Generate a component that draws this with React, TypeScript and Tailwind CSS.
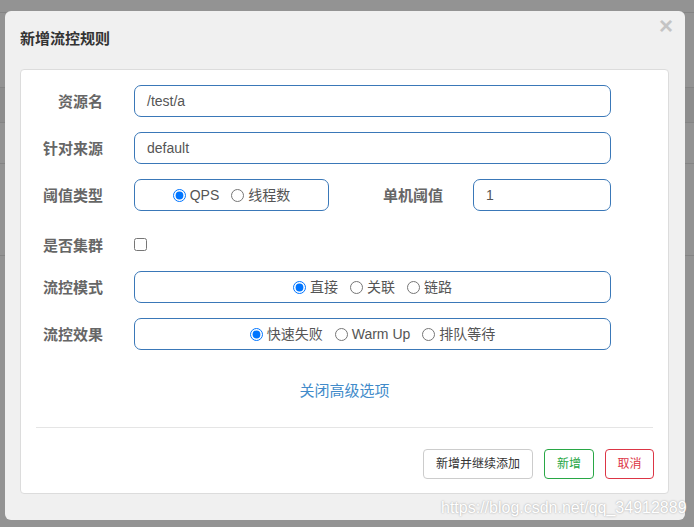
import React from "react";

const font = "font-['Liberation_Sans','Noto_Sans_CJK_SC',sans-serif]";

function Label({ text, className = "" }: { text: string; className?: string }) {
  return (
    <div className={`text-right text-[15px] font-bold text-[#666] leading-[20px] pt-[2px] ${className}`}>
      {text}
    </div>
  );
}

function Radio({ label, checked, first }: { label: string; checked?: boolean; first?: boolean }) {
  return (
    <label className={`flex items-center ${first ? "" : "ml-[12px]"}`}>
      <input type="radio" defaultChecked={checked} className="m-0 w-[13px] h-[13px]" name={label} />
      <span className="ml-[4px] text-[14px] text-[#555] leading-[18px]">{label}</span>
    </label>
  );
}

function RadioBox({ items, className }: { items: { label: string; checked?: boolean }[]; className: string }) {
  return (
    <div
      className={`h-[32px] flex items-center justify-center border border-[#3a78b8] rounded-[7px] ${className}`}
    >
      {items.map((it, i) => (
        <Radio key={it.label} label={it.label} checked={it.checked} first={i === 0} />
      ))}
    </div>
  );
}

function TextInput({ value, className }: { value: string; className: string }) {
  return (
    <div
      className={`h-[32px] flex items-center px-[12px] border border-[#3a78b8] rounded-[7px] text-[14px] text-[#555] ${className}`}
    >
      {value}
    </div>
  );
}

export default function App() {
  const bgLines = [12, 87, 122, 163, 255];

  return (
    <div className={`relative w-[694px] h-[527px] overflow-hidden bg-[#939393] ${font}`}>
      {/* page behind the overlay */}
      {bgLines.map((y) => (
        <div key={y} className="absolute left-0 right-0 h-px bg-[#848484]" style={{ top: y }} />
      ))}
      <div className="absolute left-0 right-0 top-[88px] h-[34px] bg-[#8d8d8d]" />

      {/* modal */}
      <div className="absolute left-[5px] top-[11px] w-[680px] h-[509px] bg-[#f0f0f0] rounded-[6px]">
        <div className="flex items-start justify-between pl-[15px] pr-[12px]">
          <div className="pt-[17px] text-[15px] font-bold text-[#333] leading-[22px]">新增流控规则</div>
          <div className="pt-[3px] text-[24px] font-bold text-[#c4c4c4] leading-[24px]">×</div>
        </div>

        <div className="ml-[15px] mt-[19px] w-[649px] h-[425px] bg-white border border-[#dcdcdc] rounded-[4px] pt-[15px]">
          <div className="flex items-center gap-[31px] mb-[15px]">
            <Label text="资源名" className="w-[82px]" />
            <TextInput value="/test/a" className="w-[477px]" />
          </div>
          <div className="flex items-center gap-[31px] mb-[15px]">
            <Label text="针对来源" className="w-[82px]" />
            <TextInput value="default" className="w-[477px]" />
          </div>
          <div className="flex items-center mb-[16px]">
            <Label text="阈值类型" className="w-[82px]" />
            <RadioBox
              className="ml-[31px] w-[195px]"
              items={[{ label: "QPS", checked: true }, { label: "线程数" }]}
            />
            <Label text="单机阈值" className="w-[114px]" />
            <TextInput value="1" className="ml-[30px] w-[138px]" />
          </div>
          <div className="h-[44px] pt-[9px]">
            <div className="flex items-center h-[17px] gap-[31px]">
              <Label text="是否集群" className="w-[82px]" />
              <input type="checkbox" className="m-0 w-[13px] h-[13px]" />
            </div>
          </div>
          <div className="flex items-center gap-[31px] mb-[15px]">
            <Label text="流控模式" className="w-[82px]" />
            <RadioBox
              className="w-[477px]"
              items={[{ label: "直接", checked: true }, { label: "关联" }, { label: "链路" }]}
            />
          </div>
          <div className="flex items-center gap-[31px]">
            <Label text="流控效果" className="w-[82px]" />
            <RadioBox
              className="w-[477px]"
              items={[{ label: "快速失败", checked: true }, { label: "Warm Up" }, { label: "排队等待" }]}
            />
          </div>

          <div className="mt-[31px] text-center text-[15px] leading-[20px] text-[#418bca]">关闭高级选项</div>

          <div className="mx-[15px] mt-[26px] border-t border-[#e5e5e5]" />

          <div className="flex justify-end gap-[11px] mt-[21px] pr-[14px] text-[12px]">
            <button className="h-[30px] w-[110px] border border-[#ccc] rounded-[4px] text-[#333] bg-white">
              新增并继续添加
            </button>
            <button className="h-[30px] w-[50px] border border-[#28a745] rounded-[4px] text-[#28a745] bg-white">
              新增
            </button>
            <button className="h-[30px] w-[49px] border border-[#dc3545] rounded-[4px] text-[#dc3545] bg-white">
              取消
            </button>
          </div>
        </div>
      </div>

      {/* watermark */}
      <div className="absolute left-[441px] top-[498px] text-[16px] leading-[20px] whitespace-nowrap text-white [text-shadow:0_0_2px_#9a9a9a]">
        https://blog.csdn.net/qq_34912889
      </div>
    </div>
  );
}
